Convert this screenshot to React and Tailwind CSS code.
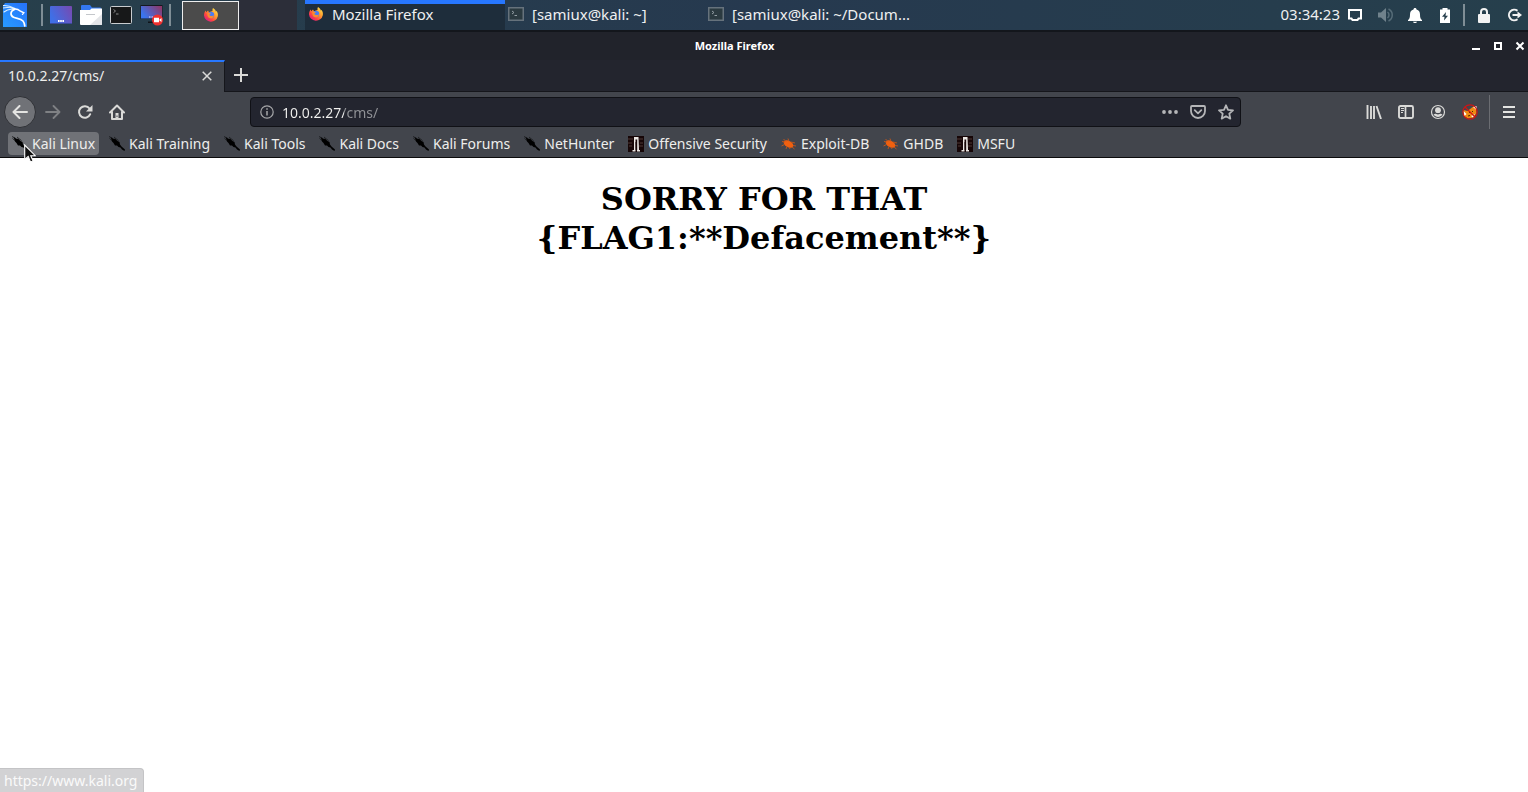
import React from "react";

function KaliLogo() {
  return (
    <svg viewBox="0 0 24 24" className="size-6">
      <defs>
        <linearGradient id="kali" x1="1" y1="0" x2="0" y2="1">
          <stop offset="0" stopColor="#2672fb" />
          <stop offset="1" stopColor="#279cff" />
        </linearGradient>
      </defs>
      <path d="M2 0h22v24H0V3z" fill="url(#kali)" />
      <g fill="none" stroke="#fff" strokeLinecap="round">
        <path d="M0 2.500c4-.3 8 .8 12 3M0 5c4-.8 8-.5 11.500 1M1 9c2.500-2.200 6-3.200 10-2.500" strokeWidth="1.100" stroke="#d9efff" />
        <path d="M11.500 6.500c-4.500 1.500-4.500 6-1 7.800 3 1.500 7 .8 9.500 3.700 1.200 1.500 1.500 3 1.800 5" strokeWidth="1.700" />
        <path d="M11 5.800c3 .2 5 .9 6.500 2.400l3.300 1.600-1.300 1.400" strokeWidth="1.400" />
      </g>
    </svg>
  );
}

function FirefoxIcon() {
  return (
    <svg viewBox="0 0 16 16" className="size-4 shrink-0">
      <defs>
        <linearGradient id="fx" x1="0.9" y1="0.1" x2="0.2" y2="0.9">
          <stop offset="0" stopColor="#ffe14a" />
          <stop offset="0.4" stopColor="#ff9a2e" />
          <stop offset="0.75" stopColor="#ff4540" />
          <stop offset="1" stopColor="#e02080" />
        </linearGradient>
      </defs>
      <path d="M10 1c2 1.200 2.600 2.300 2.800 3.500l.8-.6c1.200 1.600 1.600 3.500 1.200 5.400A7 7 0 0 1 1 8.500c0-2 .6-3.800 1.700-5l.5 1.700L5 3.500l1 1.800L9.500 4C9.300 2.800 9.500 1.800 10 1z" fill="url(#fx)" />
      <circle cx="8" cy="8" r="3.200" fill="#4a7cf0" />
      <path d="M4.500 5.500l3 .6c.6.500-.2 1.300-1.200 1.500.3 1.700 2.700 2 4.700.6-.3 2.300-2 3.400-3.800 3.100C5 11 3.900 8.500 4.500 5.500z" fill="#ff8a2b" />
    </svg>
  );
}

function DesktopIcon() {
  return (
    <svg viewBox="0 0 22 18" className="h-[18px] w-[22px]">
      <defs>
        <linearGradient id="desk" x1="0" y1="0.4" x2="1" y2="0">
          <stop offset="0" stopColor="#3f6fe6" />
          <stop offset="1" stopColor="#7849b0" />
        </linearGradient>
      </defs>
      <rect width="22" height="18" rx="1" fill="url(#desk)" />
      <rect y="17" width="22" height="1" fill="#3a4a9a" />
      <path d="M8 14h1.600v2H8zM10.200 14h1.600v2h-1.600zM12.400 14H14v2h-1.600z" fill="#fff" />
    </svg>
  );
}

function FilesIcon() {
  return (
    <svg viewBox="0 0 22 20" className="h-5 w-[22px]">
      <path d="M1 1q0-1 1-1h8l2 2.500h8q1 0 1 1V8H1z" fill="#3478f0" />
      <path d="M0 5h10l1.500-1.500H22V19q0 1-1 1H1q-1 0-1-1z" fill="#fff" />
      <path d="M22 9v10q0 1-1 1H10z" fill="#e3e5e8" />
      <path d="M6 9.500h9" stroke="#c4c7cb" />
    </svg>
  );
}

function TerminalIcon() {
  return (
    <svg viewBox="0 0 22 18" className="h-[18px] w-[22px]">
      <rect x=".5" y=".5" width="21" height="17" rx="1" fill="#171819" stroke="#c9cccf" />
      <path d="M3.500 3.500l2 1.500-2 1.700M6 8h2.500" stroke="#8a8a8a" fill="none" />
    </svg>
  );
}

function RecorderIcon() {
  return (
    <svg viewBox="0 0 24 21" className="h-[21px] w-6">
      <defs>
        <linearGradient id="rec" x1="0" y1="0.5" x2="1" y2="0">
          <stop offset="0" stopColor="#3a74ee" />
          <stop offset="1" stopColor="#94335f" />
        </linearGradient>
      </defs>
      <rect x=".5" width="22" height="14" fill="#15181f" />
      <rect x="1" y="1" width="21" height="12.500" fill="url(#rec)" />
      <path d="M8 16.500h6V18H8z" fill="#10141a" />
      <path d="M9 12h4" stroke="#dfe6ff" strokeDasharray="1 .5" />
      <circle cx="17.500" cy="15" r="5.500" fill="#f0302f" />
      <path d="M14 12.800h5v4.400h-5zM19 15l2.500-2v4z" fill="#fff" />
    </svg>
  );
}

function SmallTerminal() {
  return (
    <svg viewBox="0 0 16 14" className="h-[14px] w-4 shrink-0">
      <rect x=".75" y=".75" width="14.500" height="12.500" fill="#2b3a40" stroke="#66727c" strokeWidth="1.500" />
      <path d="M4 4l2 1.500L4 7M6.500 8.500H9" stroke="#929da3" fill="none" />
    </svg>
  );
}

function KaliMark() {
  return (
    <svg viewBox="0 0 16 16" className="size-4 shrink-0">
      <path d="M1.500 1L5 3l1-.5L8.500 5l2 1 .5 2.500 1.500 2L16 13.500 15.500 15 13 13.500l-1.500-2-2-.5-1.500-1.500H6L4.500 7 3 5.500z" fill="#000" />
      <path d="M0 .5l3.500 1.800M.5 2.500L3 4.500M5 1l3 2.500M8 3.500l1.500 1" stroke="#17181a" strokeWidth=".8" fill="none" />
    </svg>
  );
}

function OffsecMark() {
  return (
    <svg viewBox="0 0 16 16" className="size-4 shrink-0">
      <rect width="16" height="16" fill="#160607" />
      <path d="M0 3h5M0 7h4M1 10h3M11 3h4M12 7h3M11 10h4" stroke="#4e3837" />
      <path d="M6 1h4.500L11 14h1v1.500H9V6H7.500v9.500H4.500V14H6z" fill="#ece8e5" />
      <path d="M7.500 3.500h1.700V14H7.700z" fill="#160607" />
    </svg>
  );
}

function BugMark() {
  return (
    <svg viewBox="0 0 16 16" className="size-4 shrink-0">
      <ellipse cx="7.500" cy="8" rx="5.200" ry="3.200" transform="rotate(28 7.500 8)" fill="#f0600f" />
      <path d="M2.500 3l2.500 2.500M1 5.500l3 .5M7 2.500l1 3M10 6l4 1M12 9.500l3 .5M11 11l2.500 2M6 10.500l-1 2.500M3.500 8.500L.5 10M8 11l1 2" stroke="#c4561a" fill="none" strokeWidth=".9" />
    </svg>
  );
}

const bookmarks = [
  ["Kali Linux", KaliMark],
  ["Kali Training", KaliMark],
  ["Kali Tools", KaliMark],
  ["Kali Docs", KaliMark],
  ["Kali Forums", KaliMark],
  ["NetHunter", KaliMark],
  ["Offensive Security", OffsecMark],
  ["Exploit-DB", BugMark],
  ["GHDB", BugMark],
  ["MSFU", OffsecMark],
];

function IconButton({ label, children, className = "size-8" }) {
  return (
    <button type="button" aria-label={label} className={"flex shrink-0 items-center justify-center " + className}>
      {children}
    </button>
  );
}

function Panel() {
  return (
    <header className="flex h-8 items-start border-b-2 border-[#13161c] bg-linear-to-r from-[#273f4b] via-[#26394f] to-[#263f4c] text-[#eef0f1]">
      <div className="flex h-[30px] items-center">
        <IconButton label="Applications" className="h-[30px] w-[30px]"><KaliLogo /></IconButton>
        <div className="ml-[11px] h-[22px] w-0.5 bg-[#7f8e96]" />
        <div className="ml-[7px] flex items-center gap-2">
          <IconButton label="Show desktop" className="w-[22px]"><DesktopIcon /></IconButton>
          <IconButton label="Files" className="w-[22px]"><FilesIcon /></IconButton>
          <IconButton label="Terminal" className="w-[22px]"><TerminalIcon /></IconButton>
          <IconButton label="Screen recorder" className="w-6"><RecorderIcon /></IconButton>
        </div>
        <div className="ml-[5px] h-[22px] w-0.5 bg-[#7f8e96]" />
        <button type="button" aria-label="Workspace 1" className="ml-[11px] flex h-[29px] w-[57px] items-center justify-center border border-[#eeeeee] bg-[#4b4b4b]"><FirefoxIcon /></button>
        <button type="button" aria-label="Workspace 2" className="h-[30px] w-[58px] bg-[#2c2e39]" />
      </div>
      <nav className="ml-2 flex h-[30px] flex-1 text-[15px] leading-5 whitespace-nowrap">
        <button type="button" className="flex w-[200px] items-center gap-2 border-t-4 border-[#2777ff] bg-[#1e2d3b] pb-1.5 pl-[3px]"><FirefoxIcon /><span>Mozilla Firefox</span></button>
        <button type="button" className="flex w-[200px] items-center gap-2 pb-0.5 pl-[3px]"><SmallTerminal /><span>[samiux@kali: ~]</span></button>
        <button type="button" className="flex w-[200px] items-center gap-2 pb-0.5 pl-[3px]"><SmallTerminal /><span>[samiux@kali: ~/Docum...</span></button>
      </nav>
      <div className="flex h-[30px] items-center pr-1.5">
        <time className="mr-2 pb-0.5 text-[15px] leading-5">03:34:23</time>
        <svg viewBox="0 0 14 12" className="h-3 w-[14px]"><path d="M1 1h12v8.500h-2.500l-1 1.500h-5l-1-1.500H1z" fill="none" stroke="#fff" strokeWidth="2" /></svg>
        <svg viewBox="0 0 16 14" className="ml-4 h-[14px] w-4"><path d="M0 4.500h3L8 0v14L3 9.500H0z" fill="#70828c" /><path d="M9.500 4c2 1.500 2 4.500 0 6M10.500 1c5 2.500 5 9.500 0 12" fill="none" stroke="#566c78" strokeWidth="1.500" /></svg>
        <svg viewBox="0 0 14 15" className="ml-[14px] h-[15px] w-[14px]"><path d="M7 0c1 0 1.500.6 1.500 1.500C11 2.200 12 4 12 6.500c0 3 .5 4.500 2 5.500v1H0v-1c1.500-1 2-2.500 2-5.500 0-2.500 1-4.300 3.500-5C5.500.6 6 0 7 0zM5 13.700h4c-.4 1-1 1.300-2 1.300s-1.600-.3-2-1.300z" fill="#fff" /></svg>
        <svg viewBox="0 0 12 15" className="ml-[17px] h-[15px] w-3"><path d="M3.500 0h5v1.500H11V15H1V1.500h2.500z" fill="#fff" /><path d="M7 4L3 8.800h2.500L5 12.500l4-4.700H6.500z" fill="#263f4c" /></svg>
        <div className="ml-3 h-[22px] w-0.5 bg-[#7f8e96]" />
        <IconButton label="Lock" className="ml-3 w-[14px]"><svg viewBox="0 0 14 15" className="h-[15px] w-[14px]"><rect x="1" y="6" width="12" height="9" rx="1" fill="#f2f2f2" /><path d="M4 7V4a3 3 0 0 1 6 0v3" fill="none" stroke="#f2f2f2" strokeWidth="2" /></svg></IconButton>
        <IconButton label="Log out" className="ml-4 w-[15px]"><svg viewBox="0 0 15 14" className="h-[14px] w-[15px]"><path d="M10.500 2.800A5.300 5.300 0 1 0 10.500 11.200" fill="none" stroke="#f2f2f2" strokeWidth="2" /><path d="M5.500 7H12" stroke="#f2f2f2" strokeWidth="2" /><path d="M10.500 3.500L15 7l-4.500 3.500z" fill="#f2f2f2" /></svg></IconButton>
      </div>
    </header>
  );
}

function TitleBar() {
  return (
    <div className="grid h-7 grid-cols-[1fr_auto_1fr] items-center bg-[#21232b] pr-[3px] text-white">
      <span />
      <span className="mr-14 text-[11px] leading-4 font-bold">Mozilla Firefox</span>
      <div className="flex items-center justify-end gap-3">
        <IconButton label="Minimize" className="size-[10px]"><svg viewBox="0 0 10 10" className="size-[10px]"><path d="M1 7h8v2H1z" fill="#fff" /></svg></IconButton>
        <IconButton label="Maximize" className="size-[10px]"><svg viewBox="0 0 10 10" className="size-[10px]"><path d="M2 2h6v6H2z" fill="none" stroke="#fff" strokeWidth="2" /></svg></IconButton>
        <IconButton label="Close window" className="size-[10px]"><svg viewBox="0 0 10 10" className="size-[10px]"><path d="M1.500 1.500l7 7M8.500 1.500l-7 7" stroke="#fff" strokeWidth="2" /></svg></IconButton>
      </div>
    </div>
  );
}

function Tabs() {
  return (
    <div className="flex h-8 bg-[#23252e]">
      <div className="flex w-[225px] items-center justify-between border-t-2 border-r border-t-[#2777ff] border-r-[#15161b] bg-[#42454c] pr-3 pb-0.5 pl-2 text-[#eeeeec]">
        <span className="text-[14px] leading-5">10.0.2.27/cms/</span>
        <IconButton label="Close tab" className="size-[10px]"><svg viewBox="0 0 10 10" className="size-[10px]"><path d="M.7.7l8.600 8.600M9.300.7L.7 9.300" stroke="#dadad8" strokeWidth="1.500" /></svg></IconButton>
      </div>
      <div className="flex flex-1 items-center border-b border-[#15161b] pb-0.5">
        <IconButton label="New tab" className="size-8"><svg viewBox="0 0 14 14" className="size-[14px]"><path d="M7 0v14M0 7h14" stroke="#dadad8" strokeWidth="2" /></svg></IconButton>
      </div>
    </div>
  );
}

function NavBar() {
  return (
    <div className="flex h-10 items-center pr-[3px] pl-1">
      <IconButton label="Back" className="size-8 rounded-full border border-[#2f3136] bg-[#707277]"><svg viewBox="0 0 16 14" className="h-[14px] w-4"><path d="M15 7H2M7.500 1L1.500 7l6 6" fill="none" stroke="#e4e4e2" strokeWidth="2" strokeLinecap="round" strokeLinejoin="round" /></svg></IconButton>
      <IconButton label="Forward" className="size-8"><svg viewBox="0 0 16 14" className="ml-0.5 h-[14px] w-4"><path d="M1 7h13M8.500 1l6 6-6 6" fill="none" stroke="#7f8184" strokeWidth="1.800" strokeLinecap="round" strokeLinejoin="round" /></svg></IconButton>
      <IconButton label="Reload" className="size-8"><svg viewBox="0 0 16 16" className="ml-0.5 size-4"><path d="M13.200 10.200A5.800 5.800 0 1 1 12.500 4.500" fill="none" stroke="#dadad8" strokeWidth="2" strokeLinecap="round" /><path d="M15.500 1v6.500H9z" fill="#dadad8" /></svg></IconButton>
      <IconButton label="Home" className="size-8"><svg viewBox="0 0 16 16" className="ml-0.5 size-4"><path d="M1 8.500L8 1.500l7 7M3 8v7h10V8" fill="none" stroke="#dadad8" strokeWidth="2" strokeLinecap="round" strokeLinejoin="round" /><path d="M6.500 9h3v6.500h-3z" fill="#dadad8" /><path d="M8 11.500v1.500" stroke="#42454c" /></svg></IconButton>
      <div className="mr-[117px] ml-[118px] flex h-[30px] flex-1 items-center rounded border border-[#101116] bg-[#23252f] pr-[5px] pl-[9px]">
        <svg viewBox="0 0 14 14" className="size-[14px]"><circle cx="7" cy="7" r="6.200" fill="none" stroke="#a6a7a9" strokeWidth="1.200" /><path d="M7 6v4.500M7 3.300v1.500" stroke="#a6a7a9" strokeWidth="1.500" /></svg>
        <input aria-label="Address" defaultValue="10.0.2.27/cms/" className="ml-2 min-w-0 flex-1 bg-linear-to-r from-[#f2f2f0] from-[62px] to-[#929498] to-[62px] bg-clip-text pt-0.5 text-[14px] leading-5 text-transparent outline-none" />
        <IconButton label="Page actions" className="w-[18px]"><svg viewBox="0 0 16 4" className="h-1 w-4"><circle cx="2" cy="2" r="1.900" fill="#b5b6b8" /><circle cx="8" cy="2" r="1.900" fill="#b5b6b8" /><circle cx="14" cy="2" r="1.900" fill="#b5b6b8" /></svg></IconButton>
        <IconButton label="Save to Pocket" className="ml-[10px] w-[18px]"><svg viewBox="0 0 16 14" className="h-[14px] w-4"><path d="M2 1h12q1 0 1 1v4a7 7 0 0 1-14 0V2q0-1 1-1z" fill="none" stroke="#b5b6b8" strokeWidth="1.800" /><path d="M4.700 5.200L8 8.300l3.300-3.100" fill="none" stroke="#b5b6b8" strokeWidth="1.800" strokeLinecap="round" strokeLinejoin="round" /></svg></IconButton>
        <IconButton label="Bookmark this page" className="ml-[10px] w-[18px]"><svg viewBox="0 0 16 16" className="size-4"><path d="M8 1.300l2 4.500 5 .5-3.700 3.300 1 5L8 12.200l-4.300 2.400 1-5L1 6.300l5-.5z" fill="none" stroke="#b5b6b8" strokeWidth="1.800" strokeLinejoin="round" /></svg></IconButton>
      </div>
      <IconButton label="Library" className="size-8"><svg viewBox="0 0 16 14" className="h-[14px] w-4"><path d="M1.500 0v14M5 1v13M8 1v13M10.500 1l4.500 13" fill="none" stroke="#dadad8" strokeWidth="1.900" /></svg></IconButton>
      <IconButton label="Sidebars" className="size-8"><svg viewBox="0 0 16 14" className="h-[14px] w-4"><rect x="1" y="1" width="14" height="12" rx="1.500" fill="none" stroke="#dadad8" strokeWidth="1.900" /><path d="M7.500 1v12" stroke="#dadad8" strokeWidth="1.700" /><path d="M3 3.500h3M3 5.500h3M3 7.500h2" stroke="#dadad8" /></svg></IconButton>
      <IconButton label="Account" className="size-8"><svg viewBox="0 0 16 16" className="size-4"><circle cx="8" cy="8" r="6.500" fill="none" stroke="#dadad8" strokeWidth="1.200" /><circle cx="8" cy="6.200" r="2.900" fill="#dadad8" /><path d="M3.500 10.500c1.200-.8 2-.8 2.800-.5 1 .5 2.400.5 3.400 0 .8-.3 1.600-.3 2.800.5-2 3.300-7 3.300-9 0z" fill="#dadad8" /></svg></IconButton>
      <IconButton label="FoxyProxy" className="size-8"><svg viewBox="0 0 16 16" className="size-4"><path d="M1.500 6l4 1L12 2l2 1 .5 6-3 4.500L6 14.500 2 12z" fill="#ef8a12" /><path d="M1.500 7l3 3-2 2zM11 3l3.500-1V6zM9 12l4-2-2 3.500z" fill="#fff" /><path d="M7 8l1 1M10 7l1 1M6 12l2-.5" stroke="#4a2a00" /><circle cx="8" cy="8" r="7.200" fill="none" stroke="#cf1515" strokeWidth="1.200" /><path d="M3 3l10 10" stroke="#cf1515" strokeWidth="1.200" /></svg></IconButton>
      <div className="ml-[3px] h-[34px] w-px bg-[#6b6d72]" />
      <IconButton label="Open menu" className="ml-[3px] size-8"><svg viewBox="0 0 12 12" className="size-3"><path d="M0 1h12M0 6h12M0 11h12" stroke="#e4e4e2" strokeWidth="2" /></svg></IconButton>
    </div>
  );
}

export default function App() {
  return (
    <div className="relative flex min-h-screen flex-col overflow-hidden bg-white font-['Noto_Sans',sans-serif]">
      <Panel />
      <TitleBar />
      <Tabs />
      <div className="border-b border-[#0c0c0d] bg-[#42454c]">
        <NavBar />
        <nav className="flex h-[25px] items-start gap-1.5 pl-2 text-[14px] leading-5 text-[#eeeeec]">
          {bookmarks.map(([name, Mark], i) => (
            <a key={name} href="#" className={"flex h-[23px] items-center gap-1 rounded px-1 whitespace-nowrap " + (i === 0 ? "bg-[#707277]" : "")}>
              <Mark />
              <span>{name}</span>
            </a>
          ))}
        </nav>
      </div>
      <main className="flex-1 px-2 pt-[22px] text-center font-['DejaVu_Serif',serif] text-black">
        <h1 className="text-[32px] leading-[39px] font-bold">SORRY FOR THAT<br />{"{FLAG1:**Defacement**}"}</h1>
      </main>
      <div role="status" className="absolute bottom-0 left-0 rounded-tr border-t border-r border-[#c4c4c6] bg-[#d2d2d4] pr-1.5 pl-1 text-[14px] leading-[23px] text-[#fafafa]">https://www.kali.org</div>
      <svg viewBox="0 0 12 19" className="pointer-events-none absolute top-[144px] left-6 h-[19px] w-3"><path d="M.7 1v14.500l3.500-3 2.300 5.500 2.600-1-2.300-5.300h4.500z" fill="#111" stroke="#fff" strokeWidth="1.100" /></svg>
    </div>
  );
}
